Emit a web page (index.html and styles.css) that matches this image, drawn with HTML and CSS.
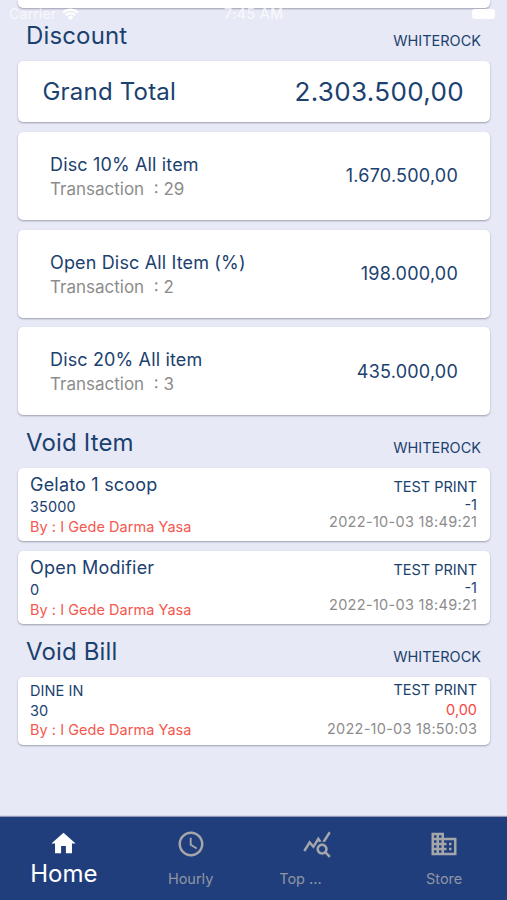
FILE: index.html
```html
<!DOCTYPE html>
<html lang="en">
<head>
<meta charset="utf-8">
<meta name="viewport" content="width=device-width, initial-scale=1">
<title>Sales report</title>
<link rel="stylesheet" href="styles.css">
</head>
<body>
<div class="status">
  <span class="carrier">Carrier</span>
  <svg class="wifi" viewBox="0 0 18 13"><path d="M1 4.8a12 12 0 0 1 16 0M3.8 7.8a8 8 0 0 1 10.4 0" fill="none" stroke="currentColor" stroke-width="2.4"/><path d="M9 13 5.8 9.9a4.8 4.8 0 0 1 6.4 0z" fill="currentColor"/></svg>
  <span class="clock">7:45 AM</span>
  <span class="battery"></span>
</div>
<main class="content">
  <div class="card previous"></div>

  <header class="section-head"><h2>Discount</h2><span class="outlet">WHITEROCK</span></header>
  <section class="card grand"><span class="grand-label">Grand Total</span><span class="grand-value">2.303.500,00</span></section>
  <section class="card discount">
    <div><p class="name">Disc 10% All item</p><p class="count">Transaction &nbsp;: 29</p></div>
    <span class="amount">1.670.500,00</span>
  </section>
  <section class="card discount">
    <div><p class="name">Open Disc All Item (%)</p><p class="count">Transaction &nbsp;: 2</p></div>
    <span class="amount">198.000,00</span>
  </section>
  <section class="card discount">
    <div><p class="name">Disc 20% All item</p><p class="count">Transaction &nbsp;: 3</p></div>
    <span class="amount">435.000,00</span>
  </section>

  <header class="section-head"><h2>Void Item</h2><span class="outlet">WHITEROCK</span></header>
  <section class="card void">
    <div><p class="item">Gelato 1 scoop</p><p class="small">35000</p><p class="by">By : I Gede Darma Yasa</p></div>
    <div class="right"><p class="print">TEST PRINT</p><p class="qty">-1</p><p class="date">2022-10-03 18:49:21</p></div>
  </section>
  <section class="card void">
    <div><p class="item">Open Modifier</p><p class="small">0</p><p class="by">By : I Gede Darma Yasa</p></div>
    <div class="right"><p class="print">TEST PRINT</p><p class="qty">-1</p><p class="date">2022-10-03 18:49:21</p></div>
  </section>

  <header class="section-head"><h2>Void Bill</h2><span class="outlet">WHITEROCK</span></header>
  <section class="card bill">
    <div><p class="small">DINE IN</p><p class="small">30</p><p class="by">By : I Gede Darma Yasa</p></div>
    <div class="right"><p class="print">TEST PRINT</p><p class="zero">0,00</p><p class="date">2022-10-03 18:50:03</p></div>
  </section>
</main>
<nav class="tabs">
  <a class="tab active"><svg viewBox="0 0 24 24"><path d="M10 20v-6h4v6h5v-8h3L12 3 2 12h3v8z"/></svg><span>Home</span></a>
  <a class="tab"><svg viewBox="0 0 24 24"><path d="M11.99 2C6.47 2 2 6.48 2 12s4.47 10 9.99 10C17.52 22 22 17.52 22 12S17.52 2 11.99 2zM12 20c-4.42 0-8-3.58-8-8s3.58-8 8-8 8 3.58 8 8-3.58 8-8 8zm.5-13H11v6l5.25 3.15.75-1.23-4.5-2.67z"/></svg><span>Hourly</span></a>
  <a class="tab top"><svg viewBox="0 0 24 24"><path d="M19.88 18.47c.44-.7.7-1.51.7-2.39 0-2.49-2.01-4.5-4.5-4.5s-4.5 2.01-4.5 4.5 2.01 4.5 4.49 4.5c.88 0 1.7-.26 2.39-.7L21.58 23 23 21.58l-3.12-3.11zm-3.8.11c-1.38 0-2.5-1.12-2.5-2.5s1.12-2.5 2.5-2.5 2.5 1.12 2.5 2.5-1.12 2.5-2.5 2.5zm-.36-8.5c-.74.02-1.45.18-2.1.45l-.55-.83-3.8 6.18-3.01-3.52-3.63 5.81L1 17l5-8 3 3.5L13 6l2.72 4.08zm2.59.5c-.64-.28-1.33-.45-2.05-.49L21.38 2 23 3.18l-4.69 7.4z"/></svg><span>Top ...</span></a>
  <a class="tab"><svg viewBox="0 0 24 24"><path d="M12 7V3H2v18h20V7H12zM6 19H4v-2h2v2zm0-4H4v-2h2v2zm0-4H4V9h2v2zm0-4H4V5h2v2zm4 12H8v-2h2v2zm0-4H8v-2h2v2zm0-4H8V9h2v2zm0-4H8V5h2v2zm10 12h-8v-2h2v-2h-2v-2h2v-2h-2V9h8v10zm-2-8h-2v2h2v-2zm0 4h-2v2h2v-2z"/></svg><span>Store</span></a>
</nav>
</body>
</html>
```
FILE: styles.css
```css
* { box-sizing: border-box; }
body {
  margin: 0;
  height: 900px;
  overflow: hidden;
  display: flex;
  flex-direction: column;
  background: #e8e9f6;
  color: #1b416f;
  font-family: Inter, "Liberation Sans", sans-serif;
}
h2, p { margin: 0; font-weight: 400; white-space: nowrap; }
.status {
  position: absolute;
  top: 5px;
  left: 9px;
  right: 9px;
  height: 18px;
  display: flex;
  align-items: center;
  color: rgba(255, 255, 255, .7);
  font-size: 14px;
  line-height: 18px;
}
.carrier { letter-spacing: .2px; }
.wifi { width: 17px; height: 12px; margin-left: 6px; color: #fff; }
.clock { position: absolute; left: 215px; font-weight: 500; letter-spacing: .5px; }
.battery { width: 23px; height: 10px; margin: 0 3px 0 auto; border-radius: 3px; background: #fff; }

.content { flex: 1; padding: 0 17px 0 18px; }
.card {
  display: flex;
  justify-content: space-between;
  background: #fff;
  border-radius: 5px;
  box-shadow: 0 1px 2px rgba(50, 52, 75, .42);
}
.previous { height: 8px; border-radius: 0 0 5px 5px; }
.section-head {
  height: 53px;
  padding: 0 9px 0 8px;
  display: flex;
  justify-content: space-between;
}
.section-head h2 { padding-top: 13px; font-size: 24px; line-height: 30px; letter-spacing: .15px; }
.outlet { padding-top: 24px; font-size: 14.5px; line-height: 18px; }
.grand { height: 61px; padding: 0 26px 0 24.5px; align-items: center; }
.grand-label { font-size: 24px; letter-spacing: .2px; }
.grand-value { font-size: 26px; letter-spacing: .35px; }
.discount { height: 88px; margin-top: 9.8px; padding: 0 32px; align-items: center; }
.name { padding-top: 2px; font-size: 18px; line-height: 25px; letter-spacing: .15px; }
.count { font-size: 17px; line-height: 25px; color: #8c8c8c; }
.amount { font-size: 18px; letter-spacing: .22px; }

.void { height: 73px; padding: 5px 13px 0 12px; }
.void + .void { margin-top: 10px; }
.item { font-size: 18px; line-height: 24px; letter-spacing: .2px; }
.small { font-size: 14.5px; line-height: 19.5px; letter-spacing: .1px; }
.by { font-size: 14.5px; line-height: 19px; letter-spacing: .04px; color: #f4584e; }
.right { text-align: right; padding-top: 5px; }
.print, .qty, .date { font-size: 14.5px; line-height: 18px; }
.qty, .date { line-height: 17px; }
.date { color: #8c8c8c; letter-spacing: .3px; margin-right: -.3px; }
.bill { height: 68px; padding: 4px 13px 0 12px; }
.bill .by { line-height: 20.5px; }
.bill .right { padding-top: 0; margin-top: -1px; }
.bill .right p { line-height: 19.5px; }
.bill .date { letter-spacing: .25px; }
.zero { font-size: 14.5px; color: #f4483f; }

.tabs {
  height: 83px;
  display: flex;
  background: #213e7c;
  box-shadow: 0 -1px 1px rgba(60, 70, 110, .5);
}
.tab {
  flex: 1;
  display: flex;
  flex-direction: column;
  align-items: center;
  padding: 12px 0 0 1px;
  color: #8f96a3;
}
.tab svg { width: 30px; height: 30px; fill: #a5a6aa; }
.tab span { margin-top: 11px; font-size: 14.5px; line-height: 18px; }
.tab.active { color: #fff; }
.tab.active svg { fill: #fff; width: 29px; height: 29px; }
.tab.active span { margin-top: 1px; font-size: 24px; line-height: 30px; }
.top span { margin-right: 34px; }
```
